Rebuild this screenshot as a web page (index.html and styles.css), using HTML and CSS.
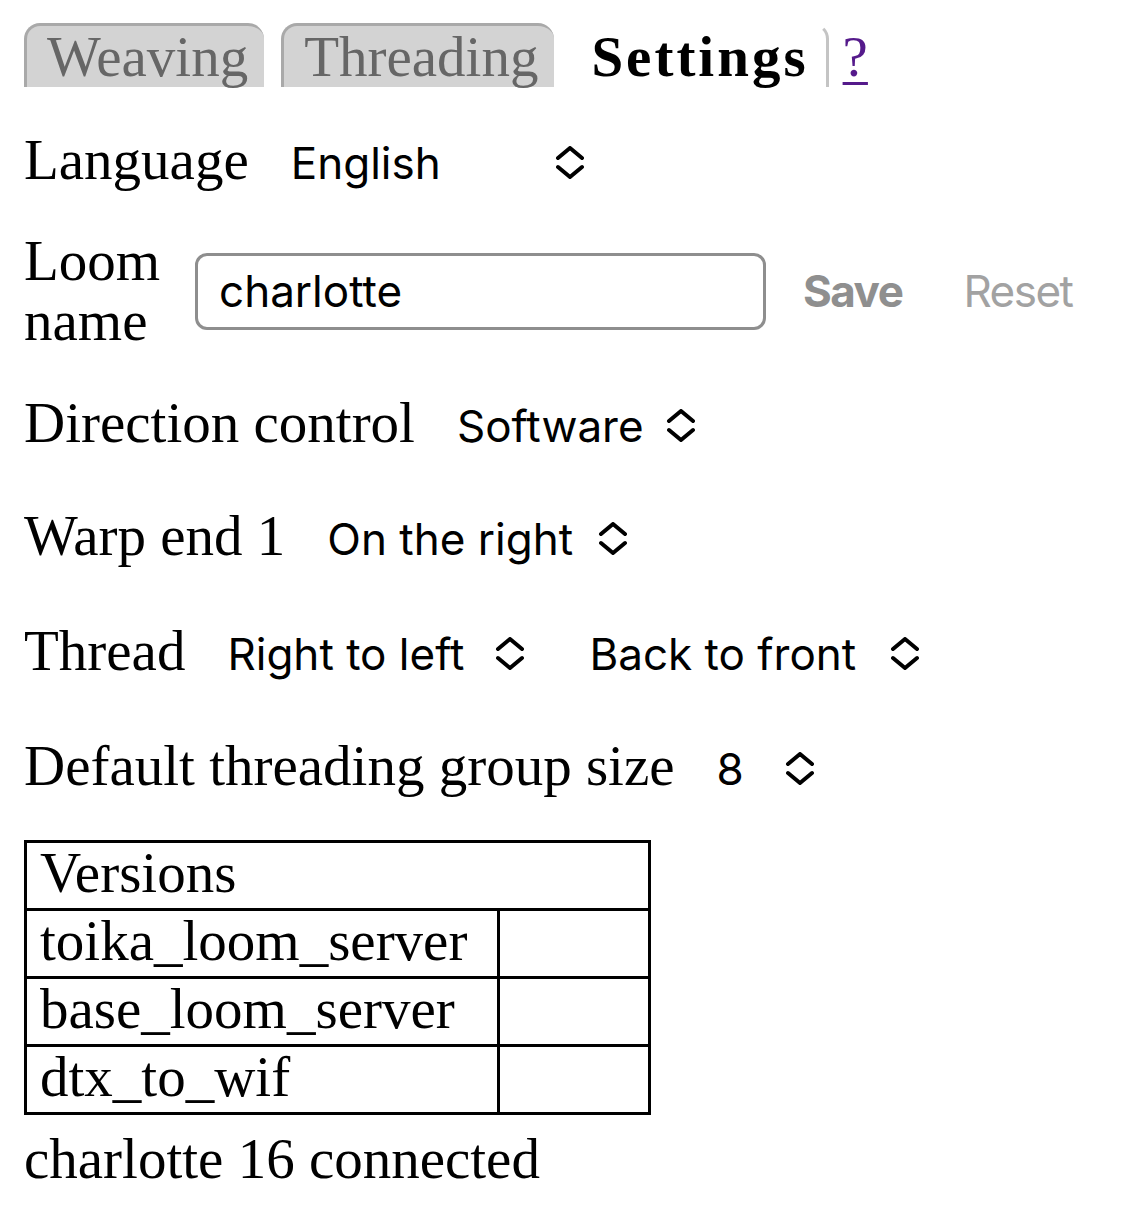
FILE: index.html
```html
<!DOCTYPE html>
<html lang="en">
<head>
<meta charset="utf-8">
<title>Settings</title>
<link rel="stylesheet" href="styles.css">
</head>
<body>
<div class="page">
  <nav class="tabs">
    <span class="tab">Weaving</span>
    <span class="tab">Threading</span>
    <span class="tab active">Settings</span>
    <a class="help" href="#">?</a>
  </nav>

  <div class="row first">
    <span class="label">Language</span>
    <span class="select"><span class="val w-lang">English</span><svg class="chev" viewBox="0 0 30 34"><path d="M3 12 L15 2 L27 12 M3 21 L15 31 L27 21"/></svg></span>
  </div>

  <div class="row loom">
    <span class="label wrap">Loom name</span>
    <span class="input">charlotte</span>
    <span class="btn save">Save</span>
    <span class="btn reset">Reset</span>
  </div>

  <div class="row dir">
    <span class="label">Direction control</span>
    <span class="select"><span class="val w-dir">Software</span><svg class="chev" viewBox="0 0 30 34"><path d="M3 12 L15 2 L27 12 M3 21 L15 31 L27 21"/></svg></span>
  </div>

  <div class="row warp">
    <span class="label">Warp end 1</span>
    <span class="select"><span class="val w-warp">On the right</span><svg class="chev" viewBox="0 0 30 34"><path d="M3 12 L15 2 L27 12 M3 21 L15 31 L27 21"/></svg></span>
  </div>

  <div class="row">
    <span class="label">Thread</span>
    <span class="select"><span class="val w-rtl">Right to left</span><svg class="chev" viewBox="0 0 30 34"><path d="M3 12 L15 2 L27 12 M3 21 L15 31 L27 21"/></svg></span>
    <span class="select second"><span class="val w-btf">Back to front</span><svg class="chev" viewBox="0 0 30 34"><path d="M3 12 L15 2 L27 12 M3 21 L15 31 L27 21"/></svg></span>
  </div>

  <div class="row">
    <span class="label">Default threading group size</span>
    <span class="select"><span class="val w-grp">8</span><svg class="chev" viewBox="0 0 30 34"><path d="M3 12 L15 2 L27 12 M3 21 L15 31 L27 21"/></svg></span>
  </div>

  <table class="versions">
    <tr><td colspan="2">Versions</td></tr>
    <tr><td>toika_loom_server</td><td class="vcol"></td></tr>
    <tr><td>base_loom_server</td><td class="vcol"></td></tr>
    <tr><td>dtx_to_wif</td><td class="vcol"></td></tr>
  </table>

  <p class="status">charlotte 16 connected</p>
</div>
</body>
</html>
```

FILE: styles.css
```css
html, body {
  margin: 0;
  padding: 0;
  background: #fff;
}

.page {
  padding: 23px 0 0 24px;
  font-family: "Liberation Serif", "Times New Roman", serif;
  font-size: 57px;
  line-height: 60px;
  color: #000;
}

/* Tabs */
.tabs {
  display: flex;
  align-items: flex-end;
  height: 64px;
}

.tab {
  display: block;
  box-sizing: border-box;
  height: 64px;
  padding: 1px 16px 0 20px;
  background: #d3d3d3;
  color: #666;
  border-top: 3px solid #a9a9a9;
  border-left: 3px solid #a9a9a9;
  border-top-left-radius: 16px;
  border-top-right-radius: 16px;
  margin-right: 17px;
}

.tab.active {
  background: transparent;
  color: #000;
  font-weight: bold;
  letter-spacing: 3px;
  border-top: 3px solid transparent;
  border-left: 0;
  border-right: 3px solid #c4c4c4;
  padding: 1px 17px 0 20px;
  margin-right: 14px;
}

.help {
  display: block;
  height: 64px;
  padding-top: 4px;
  box-sizing: border-box;
  color: #551a8b;
  text-decoration: underline;
  text-decoration-thickness: 3px;
  text-underline-offset: 6px;
}

/* Rows */
.row {
  display: flex;
  align-items: baseline;
  height: 60px;
  margin-top: 55px;
}

.row.first {
  margin-top: 43px;
}

.row.loom {
  align-items: center;
  height: 120px;
  margin-top: 41px;
}

.row.dir {
  margin-top: 42px;
}

.row.warp {
  margin-top: 53px;
}

.label {
  margin-right: 42px;
  white-space: nowrap;
}

.label.wrap {
  white-space: normal;
  width: 171px;
  margin-right: 0;
  flex: none;
}

.select {
  display: inline-flex;
  align-items: center;
  font-family: Inter, "Noto Sans", sans-serif;
  font-size: 44px;
  line-height: 60px;
}

.select.second {
  margin-left: 64px;
}

.val {
  display: inline-block;
  white-space: nowrap;
}

.w-lang { width: 264px; }
.w-dir { width: 209px; }
.w-warp { width: 271px; }
.w-rtl { width: 268px; }
.w-btf { width: 301px; }
.w-grp { width: 68px; }

.chev {
  width: 30px;
  height: 34px;
  flex: none;
}

.chev path {
  fill: none;
  stroke: #000;
  stroke-width: 4;
  stroke-linecap: round;
  stroke-linejoin: round;
}

.input {
  display: flex;
  align-items: center;
  box-sizing: border-box;
  width: 571px;
  height: 77px;
  padding-left: 21px;
  border: 3px solid #8e8e8e;
  border-radius: 12px;
  font-family: Inter, "Noto Sans", sans-serif;
  font-size: 44px;
  line-height: 60px;
}

.btn {
  font-family: Inter, "Noto Sans", sans-serif;
  font-size: 44px;
  line-height: 60px;
  letter-spacing: -1.5px;
}

.save {
  margin-left: 37px;
  font-weight: bold;
  color: #8f8f8f;
}

.reset {
  margin-left: 61px;
  color: #a2a2a2;
}

/* Versions table */
.versions {
  margin-top: 44px;
  border-collapse: collapse;
  width: 627px;
}

.versions td {
  border: 3px solid #000;
  padding: 0 10px 5px 13px;
  line-height: 60px;
  white-space: nowrap;
}

.versions td.vcol {
  width: 125px;
}

.status {
  margin: 14px 0 0 0;
}
```
